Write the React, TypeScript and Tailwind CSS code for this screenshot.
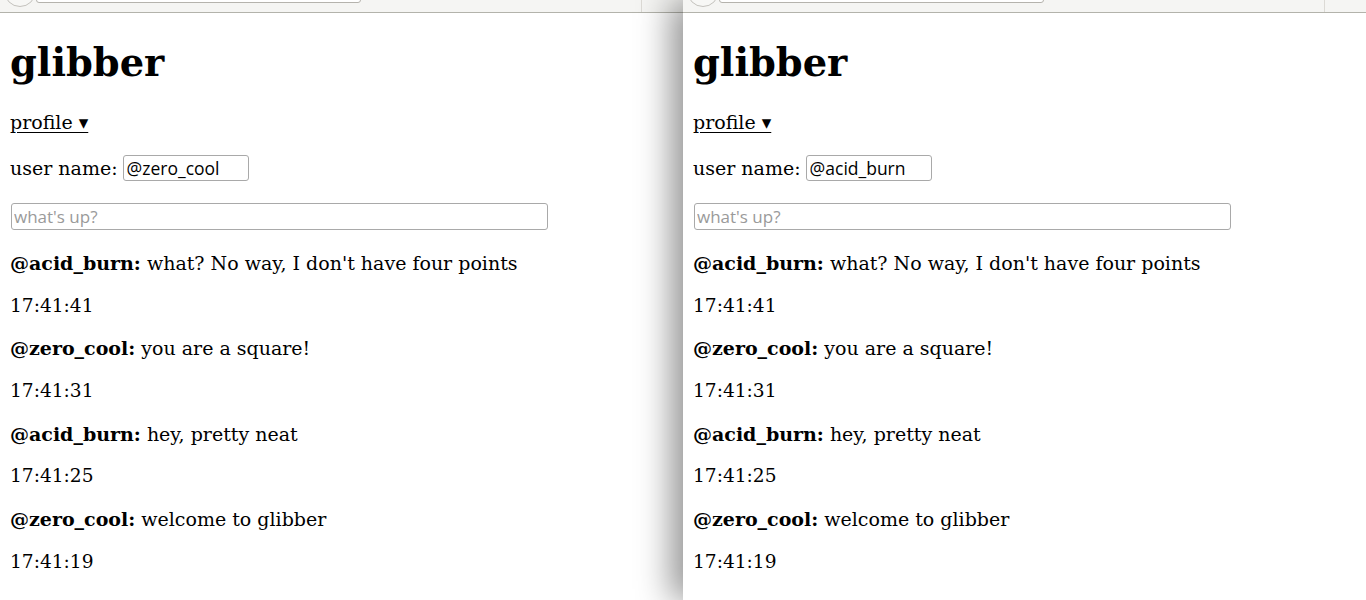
import React from "react";

interface Message {
  user: string;
  text: string;
  time: string;
}

const messages: Message[] = [
  { user: "@acid_burn", text: "what? No way, I don't have four points", time: "17:41:41" },
  { user: "@zero_cool", text: "you are a square!", time: "17:41:31" },
  { user: "@acid_burn", text: "hey, pretty neat", time: "17:41:25" },
  { user: "@zero_cool", text: "welcome to glibber", time: "17:41:19" },
];

const serif = "font-['DejaVu_Serif','Liberation_Serif',serif]";
const sans = "font-['Open_Sans','Noto_Sans',sans-serif]";

function Chrome() {
  return (
    <div className="h-[13px] shrink-0 overflow-hidden flex items-start bg-[#f5f5f3] border-b border-[#b3b3ab] pl-[4px]">
      <div className="w-[32px] h-[32px] shrink-0 -mt-[25px] rounded-full border border-[#c4c2bd] bg-[#f7f7f5]" />
      <div className="w-[325px] h-[20px] shrink-0 -mt-[17px] rounded-[3px] border border-[#b5b3ad] bg-white" />
      <div className="ml-[280px] w-px h-[12px] bg-[#dcdad5]" />
    </div>
  );
}

function Window({ user, shadow }: { user: string; shadow?: boolean }) {
  return (
    <div
      className={
        "w-[683px] h-[600px] flex flex-col bg-white text-black " +
        (shadow ? "relative z-10 shadow-[-12px_0_32px_rgba(0,0,0,0.42)]" : "")
      }
    >
      <Chrome />
      <div className={`px-[10px] text-[19px] ${serif}`}>
        <h1 className="mt-[29px] text-[38.4px] leading-[42px] font-bold">glibber</h1>
        <div className="mt-[26px] leading-[24px]">
          <span className="underline underline-offset-[3px]">profile ▾</span>
        </div>
        <div className="mt-[21px] h-[26px] flex items-center gap-[5px]">
          <span className="leading-[24px]">user name:</span>
          <input
            defaultValue={user}
            className={`w-[126px] h-[26px] px-[3px] border border-[#a9a9a9] rounded-[3px] text-[17.5px] ${sans} outline-none`}
          />
        </div>
        <input
          placeholder="what's up?"
          className={`mt-[22px] ml-px w-[537px] h-[27px] px-[2px] border border-[#a9a9a9] rounded-[3px] text-[17px] ${sans} placeholder:text-[#9a9a9a] outline-none block`}
        />
        <div className="mt-[21px] flex flex-col gap-[18.7px]">
          {messages.map((m) => (
            <React.Fragment key={m.time}>
              <p className="leading-[24px]">
                <b>{m.user}:</b> {m.text}
              </p>
              <p className="leading-[24px] text-[18.6px]">{m.time}</p>
            </React.Fragment>
          ))}
        </div>
      </div>
    </div>
  );
}

export default function App() {
  return (
    <div className="w-[1366px] h-[600px] overflow-hidden flex">
      <Window user="@zero_cool" />
      <Window user="@acid_burn" shadow />
    </div>
  );
}
